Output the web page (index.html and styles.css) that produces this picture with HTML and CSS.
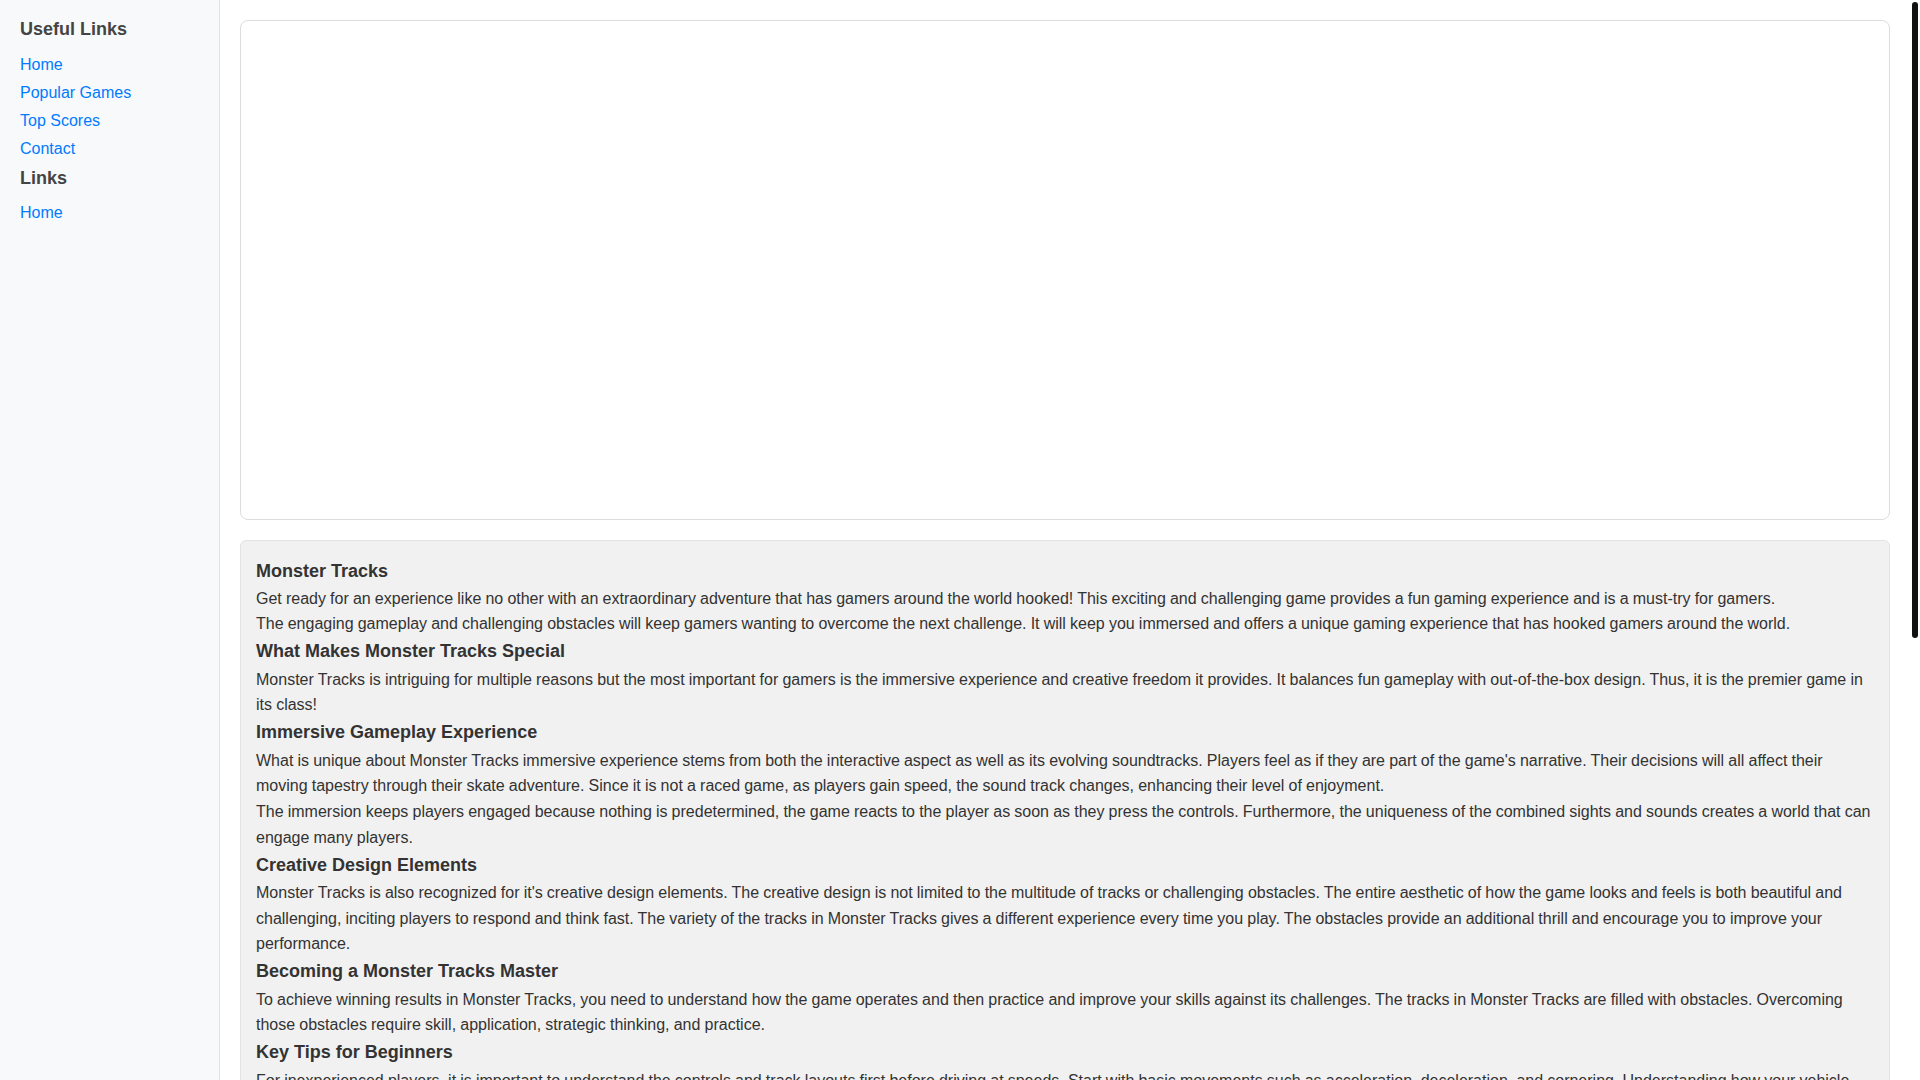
FILE: index.html
```html
<!DOCTYPE html>
<html lang="en">
<head>
    <meta charset="UTF-8">
    <meta name="viewport" content="width=device-width, initial-scale=1.0">
    <title>Monster Tracks</title>
    <link rel="stylesheet" href="styles.css">
</head>
<body>
    <div class="layout">
        <aside class="sidebar">
            <h3 class="side-title">Useful Links</h3>
            <ul class="side-links">
                <li><a href="#">Home</a></li>
                <li><a href="#">Popular Games</a></li>
                <li><a href="#">Top Scores</a></li>
                <li><a href="#">Contact</a></li>
            </ul>
            <h3 class="side-title">Links</h3>
            <ul class="side-links">
                <li><a href="#">Home</a></li>
            </ul>
        </aside>
        <main class="content">
            <div class="game-frame"></div>
            <article class="game-info">
                <h2>Monster Tracks</h2>
                <p>Get ready for an experience like no other with an extraordinary adventure that has gamers around the world hooked! This exciting and challenging game provides a fun gaming experience and is a must-try for gamers.</p>
                <p>The engaging gameplay and challenging obstacles will keep gamers wanting to overcome the next challenge. It will keep you immersed and offers a unique gaming experience that has hooked gamers around the world.</p>
                <h2>What Makes Monster Tracks Special</h2>
                <p>Monster Tracks is intriguing for multiple reasons but the most important for gamers is the immersive experience and creative freedom it provides. It balances fun gameplay with out-of-the-box design. Thus, it is the premier game in its class!</p>
                <h2>Immersive Gameplay Experience</h2>
                <p>What is unique about Monster Tracks immersive experience stems from both the interactive aspect as well as its evolving soundtracks. Players feel as if they are part of the game's narrative. Their decisions will all affect their moving tapestry through their skate adventure. Since it is not a raced game, as players gain speed, the sound track changes, enhancing their level of enjoyment.</p>
                <p>The immersion keeps players engaged because nothing is predetermined, the game reacts to the player as soon as they press the controls. Furthermore, the uniqueness of the combined sights and sounds creates a world that can engage many players.</p>
                <h2>Creative Design Elements</h2>
                <p>Monster Tracks is also recognized for it's creative design elements. The creative design is not limited to the multitude of tracks or challenging obstacles. The entire aesthetic of how the game looks and feels is both beautiful and challenging, inciting players to respond and think fast. The variety of the tracks in Monster Tracks gives a different experience every time you play. The obstacles provide an additional thrill and encourage you to improve your performance.</p>
                <h2>Becoming a Monster Tracks Master</h2>
                <p>To achieve winning results in Monster Tracks, you need to understand how the game operates and then practice and improve your skills against its challenges. The tracks in Monster Tracks are filled with obstacles. Overcoming those obstacles require skill, application, strategic thinking, and practice.</p>
                <h2>Key Tips for Beginners</h2>
                <p>For inexperienced players, it is important to understand the controls and track layouts first before driving at speeds. Start with basic movements such as acceleration, deceleration, and cornering. Understanding how your vehicle reacts to each type of terrain will help you avoid crashes and keep your momentum through the hardest sections.</p>
                <p>Take your time on the early tracks and learn where the jumps and ramps are placed. Once you feel comfortable, try to push your speed a little further on every run.</p>
                <h2>Advanced Strategies</h2>
                <p>Experienced players know that the fastest route is not always the most obvious one. Look for shortcuts, hidden paths and alternative lines through each track. Balancing your truck in the air and landing on all four wheels keeps your speed up and saves precious seconds.</p>
                <p>Pay attention to the timing of every obstacle. Some obstacles move in patterns, and learning those patterns lets you pass them without slowing down.</p>
                <h2>Why You Should Play Monster Tracks</h2>
                <p>Monster Tracks combines exciting gameplay, beautiful design and a soundtrack that changes with your every move. It is easy to pick up but hard to master, which makes it perfect for both casual players and those looking for a real challenge. Every track offers something new to discover.</p>
                <h2>Conclusion</h2>
                <p>Whether you are a new player or a seasoned gamer, Monster Tracks has something for everyone. Jump in, take the wheel and see how far you can go!</p>
            </article>
        </main>
    </div>
    <!-- page scrollbar -->
    <div class="scrollbar"><div class="scroll-thumb"></div></div>
</body>
</html>
```

FILE: styles.css
```css
* { margin: 0; padding: 0; box-sizing: border-box; }
body {
    font-family: "Liberation Sans", Arial, sans-serif;
    font-size: 16px;
    color: #333;
    background: #fff;
}
.layout {
    display: flex;
    min-height: 100vh;
    margin-right: 10px;
}
.sidebar {
    width: 220px;
    flex-shrink: 0;
    background-color: #f8f9fa;
    border-right: 1px solid #dee2e6;
    padding: 19px 20px;
}
.side-title {
    font-size: 18px;
    line-height: 1.2;
    font-weight: bold;
    color: #444;
    margin-bottom: 10px;
}
.side-links {
    list-style: none;
    margin-bottom: 5px;
}
.side-links li {
    padding: 2px 0;
    line-height: 24px;
}
.side-links a {
    color: #007bff;
    text-decoration: none;
}
.content {
    flex: 1;
    min-width: 0;
    padding: 20px;
}
.game-frame {
    height: 500px;
    background: #fff;
    border: 1px solid #ddd;
    border-radius: 8px;
}
.game-info {
    margin-top: 20px;
    background-color: #f1f1f1;
    border: 1px solid #e3e3e3;
    border-radius: 6px;
    padding: 15px;
}
.game-info h2 {
    font-size: 18px;
    line-height: 21.8px;
    margin: 4.5px 0 3.5px;
    font-weight: bold;
    color: #333;
}
.game-info p {
    line-height: 1.6;
    word-spacing: -0.3px;
}
.scrollbar {
    position: fixed;
    top: 0;
    right: 0;
    width: 10px;
    height: 100vh;
    background: #fff;
    padding: 2px;
}
.scroll-thumb {
    height: 636px;
    background: #111;
    border-radius: 3px;
}
```
